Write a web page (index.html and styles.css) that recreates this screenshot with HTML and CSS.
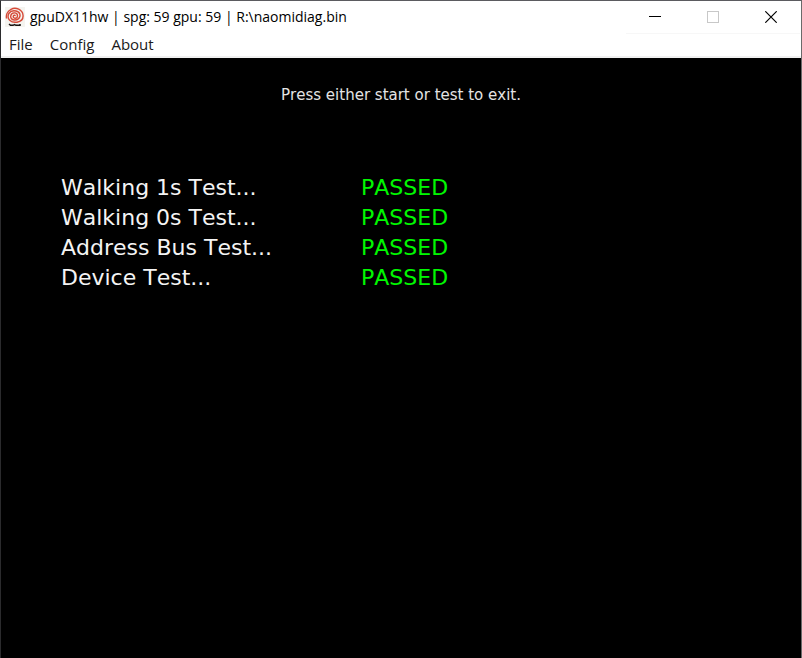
FILE: index.html
```html
<!DOCTYPE html>
<html lang="en">
<head>
<meta charset="utf-8">
<title>gpuDX11hw</title>
<link rel="stylesheet" href="styles.css">
</head>
<body>
<div class="window">
  <header class="titlebar">
    <svg class="app-icon" viewBox="0 0 20 20" aria-hidden="true">
      <rect width="20" height="20" fill="#f5f4f0"/>
      <path d="M10 9C10.500 7.800 8.300 7.800 8.200 9.500C8.200 11.800 12.300 12 12.500 9C12.700 5.300 6.500 4.500 5.700 9C5 14 13.700 14.500 15 9C15.500 4 7.500 1.500 3.800 6.500C1.200 12 6 16 12 15.200C16 14.500 18.500 12 18 8C17.500 3 11 -.5 6 2.300C2 4.500 .8 8.500 1.600 11.500" fill="none" stroke="#d64a38" stroke-width="1.400"/>
      <path d="M4 17L5.500 18.300H8L9.500 17.500L11 18.300H15V17" fill="none" stroke="#1a1413" stroke-width="1.500"/>
    </svg>
    <h1 class="title">gpuDX11hw | spg: 59 gpu: 59 | R:\naomidiag.bin</h1>
    <div class="controls">
      <button class="control" type="button" aria-label="Minimize"><svg viewBox="0 0 12 12" shape-rendering="crispEdges"><path d="M0 5.500H12" stroke="#000"/></svg></button>
      <button class="control" type="button" aria-label="Maximize" disabled><svg viewBox="0 0 12 12" shape-rendering="crispEdges"><rect x=".5" y=".5" width="11" height="11" fill="none" stroke="#c8c8c8"/></svg></button>
      <button class="control" type="button" aria-label="Close"><svg viewBox="0 0 12 12"><path d="M.3 .3L11.700 11.700M11.700 .3L.3 11.700" stroke="#000" stroke-width="1.200"/></svg></button>
    </div>
  </header>
  <nav class="menubar">
    <button class="menu" type="button">File</button>
    <button class="menu" type="button">Config</button>
    <button class="menu" type="button">About</button>
  </nav>
  <main class="screen">
    <p class="hint">Press either start or test to exit.</p>
    <dl class="results">
      <dt>Walking 1s Test...</dt><dd>PASSED</dd>
      <dt>Walking 0s Test...</dt><dd>PASSED</dd>
      <dt>Address Bus Test...</dt><dd>PASSED</dd>
      <dt>Device Test...</dt><dd>PASSED</dd>
    </dl>
  </main>
</div>
</body>
</html>
```
FILE: styles.css
```css
* { box-sizing: border-box; }
body { margin: 0; background: #000; }
.window {
  min-height: 100vh;
  display: flex;
  flex-direction: column;
  border-top: 1px solid #5b5b60;
  border-right: 1px solid #6a6a6a;
  border-left: 1px solid #2b2b2d;
  background: #fff;
  font-family: "Open Sans", "Noto Sans", sans-serif;
  color: #000;
}
.titlebar {
  display: flex;
  align-items: center;
  height: 32px;
  padding-left: 4px;
}
.app-icon { width: 20px; height: 20px; }
.title {
  flex: 1;
  margin: 0 0 0 5px;
  font-size: 14px;
  font-weight: 400;
  font-kerning: none;
  line-height: 20px;
  white-space: nowrap;
}
.controls { display: flex; padding-right: 1px; }
.control {
  display: flex;
  align-items: center;
  justify-content: center;
  width: 58px;
  height: 33px;
  padding: 0;
  border: 0;
  border-bottom: 1px solid #f7f7f7;
  background: none;
}
.control svg { width: 12px; height: 12px; }
.menubar {
  display: flex;
  gap: 1px;
  height: 25px;
  border-bottom: 2px solid #f0f0f0;
}
.menu {
  padding: 0 8px;
  border: 0;
  background: none;
  color: #1a1a1a;
  font: 15px/23px "Open Sans", "Noto Sans", sans-serif;
}
.screen {
  flex: 1;
  padding: 27px 60px;
  background: #000;
  font-family: "DejaVu Sans", sans-serif;
  font-kerning: none;
}
.hint {
  margin: 0 0 68px;
  color: #e4e4e4;
  font-size: 15px;
  line-height: 20px;
  text-align: center;
}
.results {
  display: grid;
  grid-template-columns: 300px 1fr;
  margin: 0;
  font-size: 22px;
  line-height: 30px;
  color: #f4f4f4;
}
.results dd { margin: 0; color: #00f800; }
```
